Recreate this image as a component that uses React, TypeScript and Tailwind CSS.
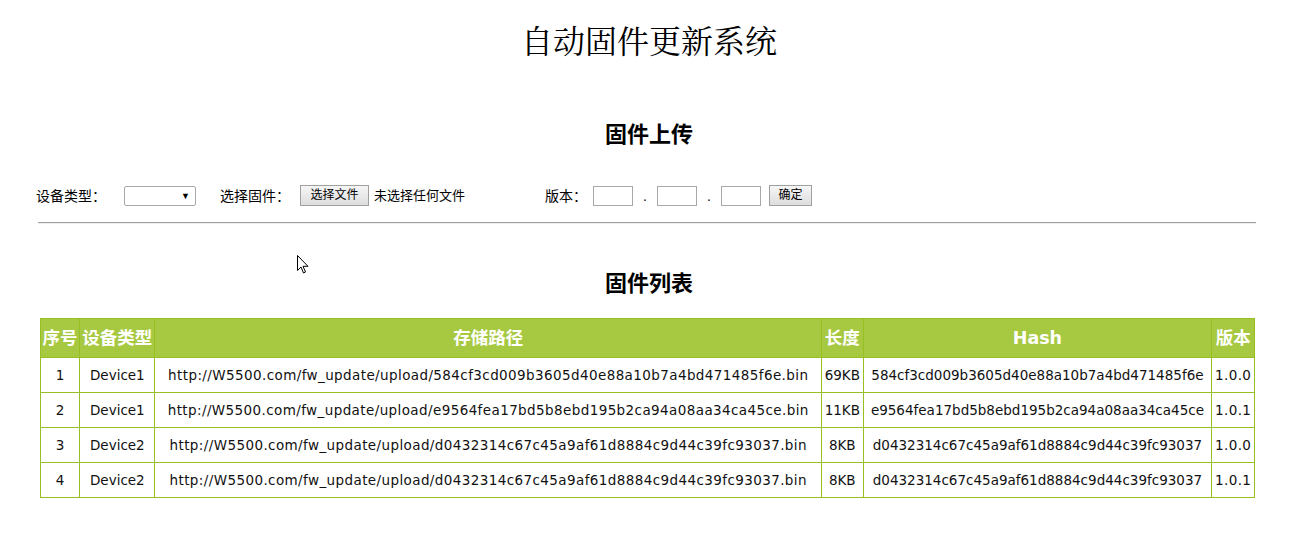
const rows = [
  ["1", "Device1", "http://W5500.com/fw_update/upload/584cf3cd009b3605d40e88a10b7a4bd471485f6e.bin", "69KB", "584cf3cd009b3605d40e88a10b7a4bd471485f6e", "1.0.0"],
  ["2", "Device1", "http://W5500.com/fw_update/upload/e9564fea17bd5b8ebd195b2ca94a08aa34ca45ce.bin", "11KB", "e9564fea17bd5b8ebd195b2ca94a08aa34ca45ce", "1.0.1"],
  ["3", "Device2", "http://W5500.com/fw_update/upload/d0432314c67c45a9af61d8884c9d44c39fc93037.bin", "8KB", "d0432314c67c45a9af61d8884c9d44c39fc93037", "1.0.0"],
  ["4", "Device2", "http://W5500.com/fw_update/upload/d0432314c67c45a9af61d8884c9d44c39fc93037.bin", "8KB", "d0432314c67c45a9af61d8884c9d44c39fc93037", "1.0.1"],
];

const heads = ["序号", "设备类型", "存储路径", "长度", "Hash", "版本"];

const cjk = "font-['Liberation_Sans','Noto_Sans_CJK_SC',sans-serif]";

export default function App() {
  return (
    <div className={`relative min-h-[548px] bg-white text-black ${cjk}`}>
      <h1 className="pt-[22px] text-center font-['Liberation_Serif','Noto_Serif_CJK_SC','Noto_Sans_CJK_SC',serif] text-[32px] leading-[40px] font-normal">
        自动固件更新系统
      </h1>

      <h2 className="mt-[58px] text-center text-[22px] leading-[30px] font-bold">固件上传</h2>

      <div className="mt-[35px] flex items-center pl-[36px] text-[14px] leading-[20px]">
        <span>设备类型：</span>
        <div className="ml-[18px] flex h-[20px] w-[72px] items-center justify-end rounded-[2px] border border-[#a9a9a9] pr-[5px] text-[9px]">
          ▼
        </div>
        <span className="ml-[24px]">选择固件：</span>
        <button className="ml-[10px] h-[21px] w-[69px] border border-[#a0a0a0] bg-gradient-to-b from-[#f6f6f6] to-[#dddddd] text-[12px] leading-[19px]">
          选择文件
        </button>
        <span className="ml-[5px] text-[13px]">未选择任何文件</span>
        <span className="ml-[80px]">版本：</span>
        <input className="ml-[6px] h-[20px] w-[40px] border border-[#a9a9a9]" />
        <span className="mx-[10px] w-[4px] text-center">.</span>
        <input className="h-[20px] w-[40px] border border-[#a9a9a9]" />
        <span className="mx-[10px] w-[4px] text-center">.</span>
        <input className="h-[20px] w-[40px] border border-[#a9a9a9]" />
        <button className="ml-[8px] h-[21px] w-[43px] border border-[#a0a0a0] bg-gradient-to-b from-[#f6f6f6] to-[#dddddd] text-[12px] leading-[19px]">
          确定
        </button>
      </div>

      <div className="ml-[38px] mr-[42px] mt-[16px] h-[2px] border-t border-[#a0a0a0] border-b border-b-[#eeeeee]" />

      <h2 className="mt-[45px] text-center text-[22px] leading-[30px] font-bold">固件列表</h2>

      <div className="mt-[19px] pl-[40px] pr-[43px]">
        <table className="w-full border-collapse font-['DejaVu_Sans','Noto_Sans_CJK_SC',sans-serif] text-[13.5px]">
          <thead>
            <tr className="h-[39px] bg-[#a7c942] text-white">
              {heads.map((h) => (
                <th key={h} className="border border-[#98bf21] px-[1px] text-[17.5px] font-bold whitespace-nowrap">
                  {h}
                </th>
              ))}
            </tr>
          </thead>
          <tbody>
            {rows.map((r) => (
              <tr key={r[0] + r[5]} className="h-[35px]">
                {r.map((c, i) => (
                  <td
                    key={i}
                    className={`border border-[#98bf21] px-[2px] text-center whitespace-nowrap text-[#111] ${i === 2 ? "tracking-[0.4px]" : ""} ${i === 5 ? "tracking-[0.4px]" : ""}`}
                  >
                    {c}
                  </td>
                ))}
              </tr>
            ))}
          </tbody>
        </table>
      </div>

      <svg className="absolute left-[297px] top-[255px]" width="12" height="19" viewBox="0 0 12 19">
        <path d="M0.5 0.5 L0.5 15.5 L4 12 L6.5 18 L8.5 17 L6 11.3 L11 11.3 Z" fill="white" stroke="black" strokeWidth="1" />
      </svg>
    </div>
  );
}
